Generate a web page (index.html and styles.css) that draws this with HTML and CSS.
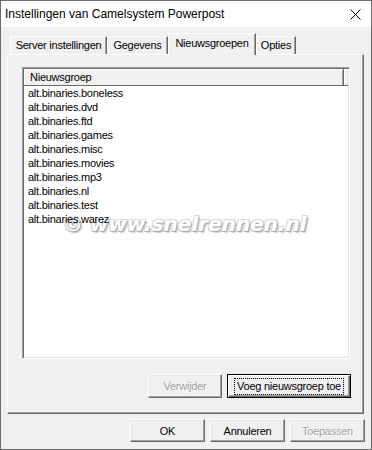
FILE: index.html
```html
<!DOCTYPE html>
<html>
<head>
<meta charset="utf-8">
<link rel="stylesheet" href="styles.css">
</head>
<body>
<div class="window">
  <div class="titlebar">
    <span class="title">Instellingen van Camelsystem Powerpost</span>
    <svg class="close" width="11" height="11" viewBox="0 0 11 11"><path d="M0.5 0.5 L10.5 10.5 M10.5 0.5 L0.5 10.5" stroke="#000" stroke-width="1" fill="none"/></svg>
  </div>
  <div class="client">
    <div class="tabs">
      <div class="tab tab-server">Server instellingen</div>
      <div class="tab tab-gegevens">Gegevens</div>
      <div class="tab tab-nieuws active">Nieuwsgroepen</div>
      <div class="tab tab-opties">Opties</div>
    </div>
    <div class="panel">
      <div class="list">
        <div class="watermark">© www.snelrennen.nl</div>
        <div class="header">
          <div class="col">Nieuwsgroep</div>
          <div class="filler"></div>
        </div>
        <div class="rows">
          <div class="row">alt.binaries.boneless</div>
          <div class="row">alt.binaries.dvd</div>
          <div class="row">alt.binaries.ftd</div>
          <div class="row">alt.binaries.games</div>
          <div class="row">alt.binaries.misc</div>
          <div class="row">alt.binaries.movies</div>
          <div class="row">alt.binaries.mp3</div>
          <div class="row">alt.binaries.nl</div>
          <div class="row">alt.binaries.test</div>
          <div class="row">alt.binaries.warez</div>
        </div>
      </div>
      <div class="panel-buttons">
        <div class="btn btn-remove disabled">Verwijder</div>
        <div class="btn btn-add default"><span class="focus">Voeg nieuwsgroep toe</span></div>
      </div>
    </div>
    <div class="dialog-buttons">
      <div class="btn">OK</div>
      <div class="btn">Annuleren</div>
      <div class="btn disabled">Toepassen</div>
    </div>
  </div>
</div>
</body>
</html>
```

FILE: styles.css
```css
* { box-sizing: border-box; }
html, body { margin: 0; padding: 0; background: #f0f0f0; }
body { width: 372px; height: 450px; overflow: hidden; }

.window {
  width: 372px;
  height: 450px;
  border: 1px solid #6b6b6b;
  background: #f0f0f0;
  font-family: "Liberation Sans", Arial, sans-serif;
  font-size: 11px;
  letter-spacing: -0.25px;
  color: #000;
}

.titlebar {
  height: 26px;
  background: #fff;
  display: flex;
  align-items: center;
  padding-left: 4px;
}
.title {
  font-size: 12px;
  letter-spacing: 0;
  font-family: "Liberation Sans", Arial, sans-serif;
}
.close { margin-left: auto; margin-right: 10px; }

.client { padding: 0 6px 0 6px; }

.tabs {
  display: flex;
  align-items: flex-end;
  height: 27px;
  padding-left: 3px;
  position: relative;
  z-index: 2;
}
.tab {
  height: 18px;
  line-height: 17px;
  text-align: center;
  background: #f0f0f0;
  border-top: 1px solid #fff;
  border-left: 1px solid #fff;
  border-right: 1px solid #696969;
  box-shadow: inset -1px 0 #a0a0a0;
}
.tab-server { width: 97px; }
.tab-gegevens { width: 61px; }
.tab-nieuws { width: 88px; }
.tab-opties { width: 40px; }
.tab.active {
  height: 22px;
  margin-bottom: -1px;
  line-height: 19px;
}

.panel {
  width: 357px;
  height: 360px;
  border-top: 1px solid #fff;
  border-left: 1px solid #fff;
  border-right: 1px solid #696969;
  border-bottom: 1px solid #696969;
  box-shadow: inset -1px -1px #a0a0a0;
  position: relative;
  z-index: 1;
}

.list {
  position: relative;
  margin: 12px 0 0 14px;
  width: 328px;
  height: 292px;
  background: #fff;
  border-top: 1px solid #a0a0a0;
  border-left: 1px solid #a0a0a0;
  border-right: 1px solid #fff;
  border-bottom: 1px solid #fff;
  box-shadow: inset 1px 1px #696969, inset -1px -1px #e3e3e3;
  padding: 1px;
}
.header {
  display: flex;
  height: 17px;
  background: #f0f0f0;
  border-bottom: 1px solid #696969;
  position: relative;
}
.col {
  width: 320px;
  padding-left: 6px;
  line-height: 16px;
  border-right: 1px solid #696969;
  box-shadow: inset 1px 1px #fff, inset -1px 0 #a0a0a0;
}
.filler {
  flex: 1;
  box-shadow: inset 1px 1px #fff;
}
.rows { position: relative; }
.row {
  height: 14px;
  line-height: 14px;
  padding-left: 4px;
}

.watermark {
  position: absolute;
  left: 40px;
  top: 144px;
  font-family: "DejaVu Sans", sans-serif;
  font-weight: bold;
  font-style: italic;
  font-size: 20px;
  letter-spacing: 0;
  color: #fff;
  text-shadow: 1px 1px 0 #a8a8a8, -1px -1px 0 #dcdcdc, 1px -1px 0 #d4d4d4, -1px 1px 0 #c8c8c8, 2px 2px 1px #d0d0d0;
  white-space: nowrap;
}

.panel-buttons {
  display: flex;
  justify-content: flex-end;
  gap: 5px;
  margin-top: 15px;
  padding-right: 12px;
}

.btn {
  height: 23px;
  width: 75px;
  display: flex;
  align-items: center;
  justify-content: center;
  background: #f0f0f0;
  border-top: 1px solid #fff;
  border-left: 1px solid #fff;
  border-right: 1px solid #696969;
  border-bottom: 1px solid #696969;
  box-shadow: inset -1px -1px #a0a0a0, inset 1px 1px #e3e3e3;
}
.btn.disabled {
  color: #a0a0a0;
  text-shadow: 1px 1px 0 #fff;
}
.panel-buttons .btn { height: 24px; }
.btn-remove { width: 74px; }
.btn-add { width: 124px; }
.btn.default {
  border: 1px solid #000;
  box-shadow: inset 1px 1px #fff, inset -1px -1px #696969, inset -2px -2px #a0a0a0;
}
.focus {
  outline: 1px dotted #000;
  outline-offset: 0;
  padding: 1px 2px;
  line-height: 13px;
}

.dialog-buttons {
  display: flex;
  justify-content: flex-end;
  gap: 5px;
  margin-top: 5px;
}
```
